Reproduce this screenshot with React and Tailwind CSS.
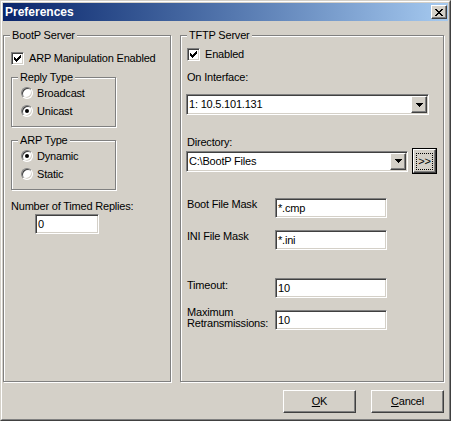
import React from "react";

const sunken =
  "border border-t-[#808080] border-l-[#808080] border-b-white border-r-white shadow-[inset_1px_1px_0_#404040,inset_-1px_-1px_0_#d4d0c8] bg-white";
const raised =
  "border border-t-white border-l-white border-b-[#404040] border-r-[#404040] shadow-[inset_-1px_-1px_0_#808080] bg-[#d4d0c8]";

// tiny pixel bitmaps for the classic glyphs
const Pixels = ({ rows }) => (
  <svg
    width={rows[0].length}
    height={rows.length}
    viewBox={`0 0 ${rows[0].length} ${rows.length}`}
    shapeRendering="crispEdges"
  >
    {rows.map((r, y) =>
      r.split("").map((c, x) =>
        c === "X" ? <rect key={`${x}-${y}`} x={x} y={y} width="1" height="1" fill="black" /> : null
      )
    )}
  </svg>
);

const CHECK = ["......X", ".....XX", "X...XXX", "XX.XXX.", "XXXXX..", ".XXX...", "..X...."];
const CLOSE = ["XX....XX", ".XX..XX.", "..XXXX..", "...XX...", "..XXXX..", ".XX..XX.", "XX....XX"];
const ARROW = ["XXXXXXX", ".XXXXX.", "..XXX..", "...X..."];

const GroupBox = ({ label, className, children }) => (
  <div
    className={`relative border border-[#808080] shadow-[1px_1px_0_#fff,inset_1px_1px_0_#fff] ${className}`}
  >
    <span className="absolute left-[6px] top-[-7px] bg-[#d4d0c8] px-[2px] leading-[13px]">
      {label}
    </span>
    {children}
  </div>
);

const Checkbox = ({ label, className }) => (
  <div className={`flex items-center h-[13px] gap-[5px] ${className}`}>
    <span className={`w-[13px] h-[13px] shrink-0 flex items-center justify-center ${sunken}`}>
      <Pixels rows={CHECK} />
    </span>
    <span className="leading-[13px]">{label}</span>
  </div>
);

const Radio = ({ label, checked }) => (
  <div className="flex items-center h-[18px] gap-[4px]">
    <span
      className={`w-[12px] h-[12px] rounded-full shrink-0 flex items-center justify-center ${sunken}`}
    >
      {checked && <span className="w-[4px] h-[4px] rounded-full bg-black" />}
    </span>
    <span className="leading-[13px]">{label}</span>
  </div>
);

const TextBox = ({ value, className }) => (
  <div className={`h-[20px] flex items-center pl-[2px] ${sunken} ${className}`}>
    <span className="leading-[13px]">{value}</span>
  </div>
);

const Combo = ({ value, className }) => (
  <div className={`h-[21px] flex items-center ${sunken} ${className}`}>
    <span className="flex-1 pl-[2px] leading-[13px]">{value}</span>
    <span className={`w-[16px] h-[17px] mr-px flex items-center justify-center ${raised}`}>
      <Pixels rows={ARROW} />
    </span>
  </div>
);

const Button = ({ children }) => (
  <button className={`w-[73px] h-[23px] flex items-center justify-center ${raised}`}>
    <span className="leading-[13px]">{children}</span>
  </button>
);

export default function App() {
  return (
    <div className="w-[451px] h-[421px] bg-[#d4d0c8] border border-t-[#d4d0c8] border-l-[#d4d0c8] border-r-[#404040] border-b-[#404040] font-['Liberation_Sans',Arial,sans-serif] text-[11px] tracking-[-0.2px] text-black">
      <div className="h-full border border-t-white border-l-white border-r-[#808080] border-b-[#808080] p-px flex flex-col">
        {/* title bar */}
        <div className="h-[18px] shrink-0 flex items-center justify-between bg-linear-to-r from-[#0a246a] to-[#a6caf0]">
          <span className="pl-[2px] text-white font-bold text-[12px] tracking-normal leading-[14px]">
            Preferences
          </span>
          <span className={`w-[16px] h-[14px] mr-px flex items-center justify-center ${raised}`}>
            <Pixels rows={CLOSE} />
          </span>
        </div>

        {/* groups */}
        <div className="flex mt-[14px]">
          <GroupBox label="BootP Server" className="w-[168px] h-[347px]">
            <div className="flex flex-col pl-[7px]">
              <Checkbox label="ARP Manipulation Enabled" className="mt-[16px]" />

              <GroupBox label="Reply Type" className="w-[105px] h-[50px] mt-[12px]">
                <div className="flex flex-col pl-[9px] pt-[6px]">
                  <Radio label="Broadcast" />
                  <Radio label="Unicast" checked />
                </div>
              </GroupBox>

              <GroupBox label="ARP Type" className="w-[105px] h-[50px] mt-[13px]">
                <div className="flex flex-col pl-[9px] pt-[6px]">
                  <Radio label="Dynamic" checked />
                  <Radio label="Static" />
                </div>
              </GroupBox>

              <div className="mt-[10px] leading-[13px]">Number of Timed Replies:</div>
              <TextBox value="0" className="w-[64px] ml-[24px] mt-px" />
            </div>
          </GroupBox>

          <GroupBox label="TFTP Server" className="w-[264px] h-[347px] ml-[9px]">
            <div className="flex flex-col pl-[6px]">
              <Checkbox label="Enabled" className="mt-[12px]" />

              <div className="mt-[10px] leading-[13px]">On Interface:</div>
              <Combo value="1: 10.5.101.131" className="w-[243px] -ml-px mt-[10px]" />

              <div className="mt-[21px] leading-[13px]">Directory:</div>
              <div className="flex items-center h-[26px] -mt-px -ml-px">
                <Combo value="C:\BootP Files" className="w-[222px]" />
                <div className="w-[25px] h-[26px] ml-[4px] border border-black">
                  <div className={`h-full flex items-center justify-center ${raised}`}>
                    <span className="w-[17px] h-[17px] flex items-center justify-center border border-dotted border-black leading-[11px]">
                      &gt;&gt;
                    </span>
                  </div>
                </div>
              </div>

              <div className="flex mt-[24px]">
                <span className="w-[88px] leading-[13px]">Boot File Mask</span>
                <TextBox value="*.cmp" className="w-[112px]" />
              </div>
              <div className="flex mt-[12px]">
                <span className="w-[88px] leading-[13px]">INI File Mask</span>
                <TextBox value="*.ini" className="w-[112px]" />
              </div>
              <div className="flex mt-[28px]">
                <span className="w-[88px] leading-[13px] pt-px">Timeout:</span>
                <TextBox value="10" className="w-[112px]" />
              </div>
              <div className="flex items-start mt-[9px]">
                <span className="w-[88px] leading-[11px]">
                  Maximum
                  <br />
                  Retransmissions:
                </span>
                <TextBox value="10" className="w-[112px] mt-[3px]" />
              </div>
            </div>
          </GroupBox>
        </div>

        {/* buttons */}
        <div className="flex justify-end gap-[15px] mt-[8px] pr-[4px]">
          <Button>
            <u className="underline-offset-1">O</u>K
          </Button>
          <Button>
            <u className="underline-offset-1">C</u>ancel
          </Button>
        </div>
      </div>
    </div>
  );
}
